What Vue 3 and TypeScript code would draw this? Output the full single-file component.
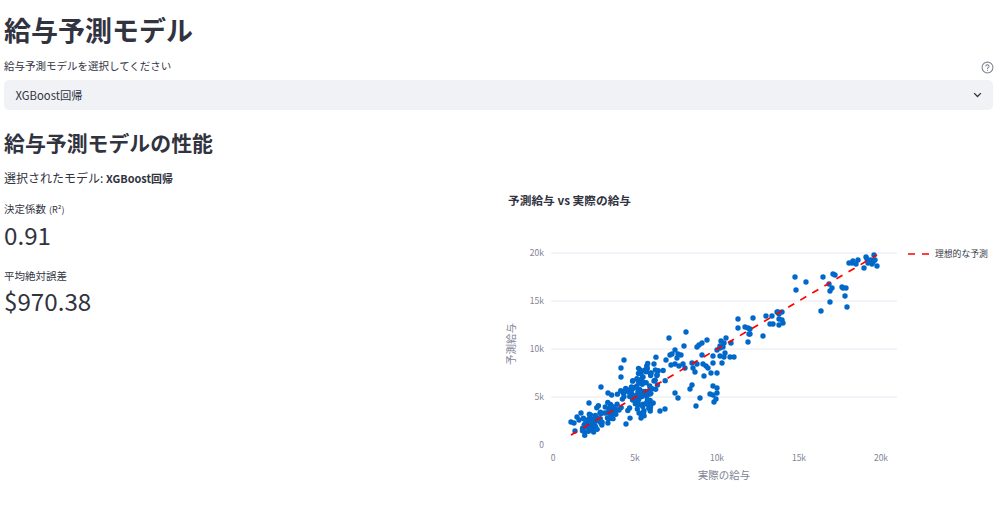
<template>
  <div class="page">
    <h1 class="title">給与予測モデル</h1>

    <div class="label-row">
      <span>給与予測モデルを選択してください</span>
      <svg class="help" viewBox="0 0 24 24" fill="none" stroke="#808495" stroke-width="2" stroke-linecap="round">
        <circle cx="12" cy="12" r="10" />
        <path d="M9 9a3 3 0 0 1 5.8 1c0 2-2.8 2.6-2.8 4" />
        <path d="M12 17.5h.01" />
      </svg>
    </div>
    <div class="select">
      <span>XGBoost回帰</span>
      <svg class="chevron" viewBox="0 0 12 8" fill="none" stroke="#31333f" stroke-width="1.8">
        <path d="M1.5 1.5 6 6l4.5-4.5" />
      </svg>
    </div>

    <h2 class="heading">給与予測モデルの性能</h2>
    <p class="selected">選択されたモデル: <strong>XGBoost回帰</strong></p>

    <div class="columns">
      <div class="metrics">
        <div v-for="m in metrics" :key="m.label" class="metric">
          <div class="metric-label">{{ m.label }}<small v-if="m.note">{{ m.note }}</small></div>
          <div class="metric-value">{{ m.value }}</div>
        </div>
      </div>

      <div class="chart">
        <div class="chart-title">予測給与 vs 実際の給与</div>
        <svg class="plot" width="493" height="280" viewBox="500 210 493 280">
          <line v-for="t in yTicks" :key="t.label" v-show="t.label !== '0'" x1="551" x2="897" :y1="t.y" :y2="t.y" class="grid" />
          <text v-for="t in yTicks" :key="`y-${t.label}`" x="544" :y="t.y + 3" text-anchor="end" class="tick">{{ t.label }}</text>
          <text v-for="t in xTicks" :key="`x-${t.label}`" :x="t.x" y="461" text-anchor="middle" class="tick">{{ t.label }}</text>

          <circle v-for="(p, i) in points" :key="i" :cx="p[0]" :cy="p[1]" r="2.7" fill="#0068c9" />
          <line x1="571" y1="435" x2="877" y2="255" class="ideal" />

          <text x="724" y="479" text-anchor="middle" class="axis-title">実際の給与</text>
          <text x="515" y="344" text-anchor="middle" transform="rotate(-90 515 344)" class="axis-title">予測給与</text>

          <line x1="908" y1="254" x2="930" y2="254" class="ideal" />
          <text x="935" y="257" class="legend">理想的な予測</text>
        </svg>
      </div>
    </div>
  </div>
</template>

<script setup lang="ts">
import { computed } from 'vue';

const metrics = [
  { label: '決定係数', note: '(R²)', value: '0.91' },
  { label: '平均絶対誤差', note: '', value: '$970.38' },
];

const xTicks = [
  { label: '0', x: 553 },
  { label: '5k', x: 635 },
  { label: '10k', x: 717 },
  { label: '15k', x: 799 },
  { label: '20k', x: 881 },
];

const yTicks = [
  { label: '0', y: 445 },
  { label: '5k', y: 397 },
  { label: '10k', y: 349 },
  { label: '15k', y: 301 },
  { label: '20k', y: 253 },
];

// read off the chart, in page pixels
const sparse: [number, number][] = [
  [795, 277], [806, 282], [796, 290], [823, 277], [833, 274], [835, 275], [829, 284], [832, 288],
  [830, 291], [842, 287], [843, 288], [846, 288], [845, 296], [830, 302], [821, 311], [847, 307],
  [849, 263], [853, 261], [852, 263], [856, 264], [858, 260], [864, 268], [866, 257], [867, 259],
  [868, 263], [871, 260], [874, 255], [873, 262], [875, 260], [877, 266], [872, 264], [869, 261],
  [753, 318], [766, 316], [772, 316], [777, 312], [778, 312], [782, 312], [779, 314], [779, 319],
  [782, 320], [783, 323], [770, 324], [773, 324], [779, 325], [763, 336], [750, 334], [750, 329],
  [669, 338], [686, 332], [684, 346], [697, 347], [699, 345], [702, 343], [707, 340], [721, 341],
  [726, 338], [738, 319], [738, 328], [745, 327], [748, 328], [749, 334], [748, 342], [731, 343],
  [724, 343], [720, 346], [723, 347], [675, 350], [670, 355], [672, 354], [678, 354], [681, 355],
  [677, 358], [666, 360], [654, 364], [671, 365], [675, 364], [679, 366], [683, 364], [685, 368],
  [692, 363], [693, 368], [695, 372], [697, 364], [702, 355], [703, 364], [706, 366], [713, 363],
  [708, 368], [711, 373], [704, 376], [717, 373], [713, 356], [720, 356], [724, 357], [722, 363],
  [730, 357], [734, 357], [717, 350], [720, 348], [725, 353], [692, 385], [690, 389], [700, 398],
  [696, 406], [713, 386], [717, 388], [710, 394], [713, 395], [717, 393], [716, 399], [714, 402],
  [678, 398], [675, 393], [665, 409], [660, 411], [624, 360], [621, 368], [621, 377], [640, 370],
  [641, 373], [643, 377], [601, 387], [608, 393], [589, 403], [626, 424], [594, 429], [571, 422],
  [574, 423], [577, 417], [581, 413], [579, 420], [575, 431], [639, 413],
];

// the dense clouds are just scattered around the line
const points = computed(() => {
  let seed = 41;
  const rnd = () => {
    seed = (seed * 16807) % 2147483647;
    return seed / 2147483647;
  };
  const cloud: [number, number][] = [];
  const scatter = (count: number, from: number, span: number, spread: number) => {
    for (let i = 0; i < count; i++) {
      const x = from + (rnd() + rnd()) * span;
      cloud.push([x, 434 - (x - 571) * 0.588 + (rnd() + rnd() - 1) * spread]);
    }
  };
  scatter(50, 580, 12, 12);
  scatter(35, 596, 14, 16);
  scatter(100, 618, 25, 30);
  return [...sparse, ...cloud];
});
</script>

<style>
body {
  background: #fff;
}
</style>

<style scoped>
.page {
  width: 1001px;
  height: 506px;
  box-sizing: border-box;
  padding: 12px 8px 0 4px;
  overflow: hidden;
  font-family: "Noto Sans CJK JP", "Noto Sans", sans-serif;
  color: #31333f;
}

.title {
  margin: 0;
  font-size: 27px;
  line-height: 36px;
  font-weight: 700;
}

.label-row {
  display: flex;
  justify-content: space-between;
  align-items: center;
  margin-top: 7px;
  height: 20px;
  font-size: 10.5px;
}

.help {
  width: 13px;
  height: 13px;
  margin-top: 5px;
  margin-right: -0.5px;
}

.select {
  display: flex;
  justify-content: space-between;
  align-items: center;
  height: 30px;
  margin-top: 5px;
  padding: 0 11px 0 11.5px;
  border-radius: 5px;
  background: #f0f2f6;
  font-size: 11.3px;
}

.chevron {
  width: 9px;
  height: 6px;
}

.heading {
  margin: 17px 0 0;
  font-size: 20.9px;
  line-height: 30px;
  font-weight: 700;
}

.selected {
  margin: 12px 0 0;
  font-size: 12px;
  line-height: 18px;
}

.selected strong {
  font-size: 10.9px;
}

.columns {
  display: flex;
  gap: 17px;
}

.metrics {
  width: 487px;
  padding-top: 14px;
}

.metric {
  margin-bottom: 18px;
}

.metric-label {
  font-size: 10.5px;
  line-height: 16px;
}

.metric-label small {
  margin-left: 3px;
  font-size: 9px;
}

.metric-value {
  padding-top: 1px;
  font-size: 24.2px;
  line-height: 32px;
}

.metric:first-child {
  margin-bottom: 17px;
}

.chart {
  flex: 1;
  margin-top: 3px;
}

.chart-title {
  font-size: 11.7px;
  font-weight: 700;
  line-height: 20px;
}

.plot {
  display: block;
  margin-left: -8px;
  overflow: visible;
}

.grid {
  stroke: #e8e9f3;
  stroke-width: 1;
}

.tick {
  font-size: 8.5px;
  fill: #808495;
}

.axis-title {
  font-size: 10.5px;
  fill: #808495;
}

.legend {
  font-size: 8.8px;
  fill: #31333f;
}

.ideal {
  stroke: #ff0000;
  stroke-width: 1.7;
  stroke-dasharray: 7 7;
}
</style>
